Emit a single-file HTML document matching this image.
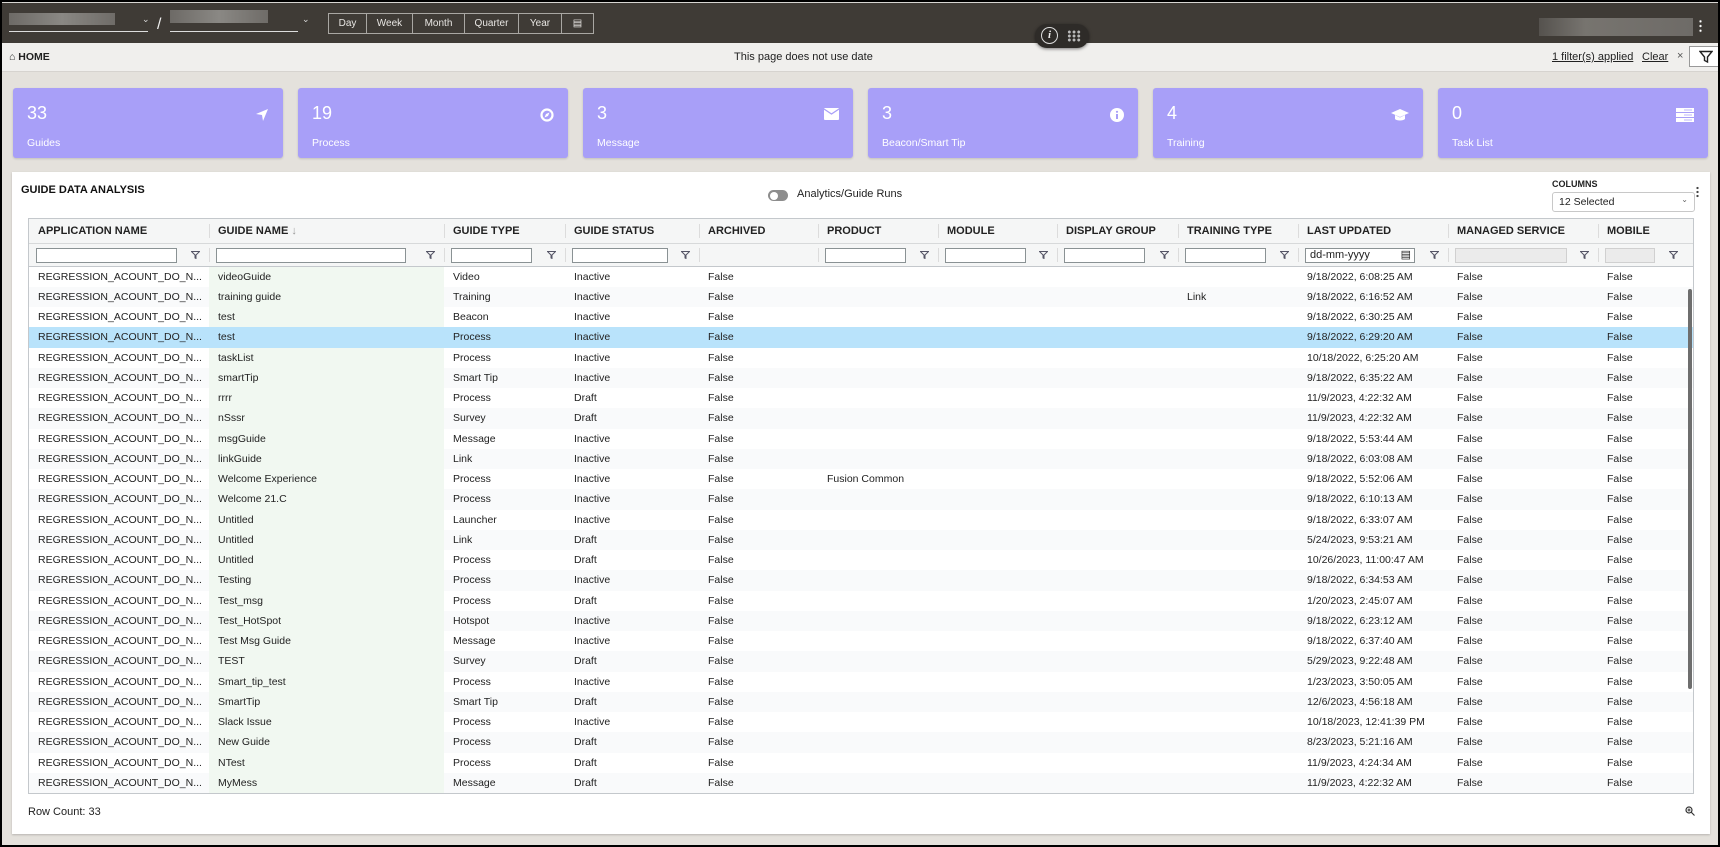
<!DOCTYPE html>
<html><head><meta charset="utf-8"><style>
*{box-sizing:border-box;margin:0;padding:0}
body{width:1720px;height:847px;overflow:hidden;background:#000;font-family:"Liberation Sans",sans-serif;position:relative}
#frame{position:absolute;left:2px;top:2px;width:1716px;height:843px;background:#e4e1dc;overflow:hidden}
.abs{position:absolute}
#top{left:0;top:0;width:1716px;height:41px;background:#3f3b36;border-top:1px solid #d8d6d2}
.blur{background:linear-gradient(90deg,#6d6a66,#8a8884,#6f6c68);}
.btns{left:326px;top:10px;height:21px;display:flex;border:1px solid #a9a7a3}
.btns div{color:#e8e6e3;font-size:10px;line-height:19px;text-align:center;border-right:1px solid #a9a7a3}
.btns div:last-child{border-right:none}
#home{left:0;top:41px;width:1716px;height:29px;background:#f0efed;border-bottom:1px solid #d6d3cf;font-size:11px;color:#222}
.card{position:absolute;top:86px;width:270px;height:70px;background:#a89ff8;border-radius:3px;color:#fff;box-shadow:0 1px 2px rgba(0,0,0,.15)}
.card .n{position:absolute;left:14px;top:15px;font-size:18px;font-weight:300}
.card .l{position:absolute;left:14px;top:49px;font-size:10.5px}
.card svg{position:absolute;right:14px;top:20px}
#panel{left:10px;top:170px;width:1698px;height:662px;background:#fff;box-shadow:0 1px 2px rgba(0,0,0,.2)}
table{border-collapse:collapse;table-layout:fixed;font-size:10.5px;color:#222}
#tbl{position:absolute;left:16px;top:46px;width:1666px;height:576px;border:1px solid #c4c8cc;overflow:hidden}
th{height:24px;line-height:24px;text-align:left;font-size:11px;font-weight:bold;padding-left:9px;background:#f5f6f6;position:relative;white-space:nowrap;overflow:hidden}
th .s{position:absolute;left:0;top:5px;width:1px;height:14px;background:#dcdcdc}
tr.f td{height:23px;line-height:23px;background:#f5f6f6;border-bottom:1px solid #c4c8cc;border-top:1px solid #d7d9da;position:relative}
tr.f .in{position:absolute;left:7px;top:4px;height:15px;border:1px solid #8a9294;background:#fff}
tr.f .in.d{background:#ebebeb;border-color:#d0d0d0}
tr.f .fi{position:absolute;right:9px;top:7px}
tr.f .s{position:absolute;left:0;top:4px;width:1px;height:14px;background:#dcdcdc}
tbody tr{height:20.25px}
tbody td{height:20.25px;line-height:18px;padding-left:9px;white-space:nowrap;overflow:hidden}
tbody tr:nth-child(even) td{background:#f9fafb}
tbody td.g{background:#f1f8f1!important}
tbody tr.sel td{background:#b9e3fb!important}
</style></head><body><div id="frame">
<div id="top" class="abs">
  <div class="abs blur" style="left:7px;top:10px;width:106px;height:12px"></div>
  <div class="abs" style="left:7px;top:28px;width:139px;height:1px;background:#ddd"></div>
  <div class="abs" style="left:140px;top:11px;color:#ddd;font-size:9px">&#8964;</div>
  <div class="abs" style="left:155px;top:13px;color:#eee;font-size:16px">/</div>
  <div class="abs blur" style="left:168px;top:7px;width:98px;height:13px"></div>
  <div class="abs" style="left:168px;top:28px;width:128px;height:1px;background:#ddd"></div>
  <div class="abs" style="left:300px;top:11px;color:#ddd;font-size:9px">&#8964;</div>
  <div class="abs btns"><div style="width:38px">Day</div><div style="width:46px">Week</div><div style="width:52px">Month</div><div style="width:54px">Quarter</div><div style="width:43px">Year</div><div style="width:31px">&#9636;</div></div>
  <div class="abs blur" style="left:1537px;top:15px;width:154px;height:18px;background:linear-gradient(90deg,#55524e,#77746f 30%,#6e6b67)"></div>
  <div class="abs" style="left:1697px;top:16px;width:3px;height:14px;background:radial-gradient(circle,#fff 1px,transparent 1.3px) 0 0/3px 4.7px"></div>
</div>
<div id="home" class="abs">
  <div class="abs" style="left:7px;top:8px;font-weight:bold;font-size:10.5px">&#8962; HOME</div>
  <div class="abs" style="left:732px;top:8px">This page does not use date</div>
  <div class="abs" style="left:1550px;top:8px;text-decoration:underline">1 filter(s) applied</div>
  <div class="abs" style="left:1640px;top:8px;text-decoration:underline">Clear</div>
  <div class="abs" style="left:1675px;top:7px;color:#555">×</div>
  <div class="abs" style="left:1687px;top:3px;width:32px;height:21px;border:1px solid #999;background:#fff"><svg width="14" height="14" viewBox="0 0 14 14" style="margin:3px 0 0 9px"><path d="M1 1.5h12L8.5 7v5l-3-1.5V7z" fill="none" stroke="#222" stroke-width="1.4"/></svg></div>
</div>
<div class="abs" style="left:1033px;top:22px;width:54px;height:24px;border-radius:12px;background:#2e2b28;box-shadow:0 1px 3px rgba(0,0,0,.5)">
  <div class="abs" style="left:6px;top:3px;width:17px;height:17px;border:1.5px solid #ddd;border-radius:50%;color:#eee;font:italic bold 11px 'Liberation Serif',serif;text-align:center;line-height:15px">i</div>
  <div class="abs" style="left:32px;top:6px;width:14px;height:12px;background:radial-gradient(circle,#bbb 1.3px,transparent 1.6px) 0 0/4.7px 4px"></div>
</div>
<div class="card" style="left:11px"><div class="n">33</div><div class="l">Guides</div><svg width="14" height="14" viewBox="0 0 14 14"><path d="M13 1L1 6l6 1 1 6z" fill="#fff"/></svg></div>
<div class="card" style="left:296px"><div class="n">19</div><div class="l">Process</div><svg width="14" height="14" viewBox="0 0 14 14"><circle cx="7" cy="7" r="5.5" fill="none" stroke="#fff" stroke-width="2.2"/><path d="M9.5 4.5L6 6 4.5 9.5 8 8z" fill="#fff"/></svg></div>
<div class="card" style="left:581px"><div class="n">3</div><div class="l">Message</div><svg width="15" height="12" viewBox="0 0 15 12"><rect x="0" y="0" width="15" height="12" rx="1" fill="#fff"/><path d="M0 1l7.5 5L15 1" fill="none" stroke="#a89ff8" stroke-width="1.3"/></svg></div>
<div class="card" style="left:866px"><div class="n">3</div><div class="l">Beacon/Smart Tip</div><svg width="14" height="14" viewBox="0 0 14 14"><circle cx="7" cy="7" r="7" fill="#fff"/><rect x="6" y="6" width="2" height="5" fill="#a89ff8"/><circle cx="7" cy="3.8" r="1.1" fill="#a89ff8"/></svg></div>
<div class="card" style="left:1151px"><div class="n">4</div><div class="l">Training</div><svg width="18" height="14" viewBox="0 0 18 14"><path d="M9 1L0 5l9 4 9-4z" fill="#fff"/><path d="M4 7v4c2 2 8 2 10 0V7L9 9.5z" fill="#fff"/></svg></div>
<div class="card" style="left:1436px"><div class="n">0</div><div class="l">Task List</div><svg width="18" height="14" viewBox="0 0 18 14"><rect width="18" height="4" fill="#fff"/><rect y="5" width="18" height="4" fill="#fff"/><rect y="10" width="18" height="4" fill="#fff"/><path d="M8 2h8M8 7h8M8 12h8" stroke="#a89ff8" stroke-width=".8"/></svg></div>
<div id="panel" class="abs">
  <div class="abs" style="left:9px;top:12px;font-size:11px;font-weight:bold;color:#111">GUIDE DATA ANALYSIS</div>
  <div class="abs" style="left:756px;top:18px;width:20px;height:11px;border-radius:6px;background:#8d8d8d"><div style="margin:1.5px;width:8px;height:8px;border-radius:50%;background:#fff"></div></div>
  <div class="abs" style="left:785px;top:16px;font-size:11px;color:#222">Analytics/Guide Runs</div>
  <div class="abs" style="left:1540px;top:7px;font-size:9px;font-weight:bold;color:#222">COLUMNS</div>
  <div class="abs" style="left:1684px;top:14px;width:3px;height:12px;background:radial-gradient(circle,#444 1px,transparent 1.3px) 0 0/3px 4px"></div>
  <div class="abs" style="left:1540px;top:20px;width:143px;height:20px;border:1px solid #c8c8c8;border-radius:3px;font-size:10.5px;padding:3px 0 0 6px;color:#222">12 Selected<span style="position:absolute;right:6px;top:2px;font-size:8px;color:#666">&#8964;</span></div>
  <div id="tbl">
  <table style="width:1666px">
  <colgroup><col style="width:180px"><col style="width:235px"><col style="width:121px"><col style="width:134px"><col style="width:119px"><col style="width:120px"><col style="width:119px"><col style="width:121px"><col style="width:120px"><col style="width:150px"><col style="width:150px"><col style="width:89px"><col style="width:8px"></colgroup>
  <thead><tr><th>APPLICATION NAME</th><th><span class="s"></span>GUIDE NAME <span style="color:#999;font-weight:normal">&#8595;</span></th><th><span class="s"></span>GUIDE TYPE</th><th><span class="s"></span>GUIDE STATUS</th><th><span class="s"></span>ARCHIVED</th><th><span class="s"></span>PRODUCT</th><th><span class="s"></span>MODULE</th><th><span class="s"></span>DISPLAY GROUP</th><th><span class="s"></span>TRAINING TYPE</th><th><span class="s"></span>LAST UPDATED</th><th><span class="s"></span>MANAGED SERVICE</th><th><span class="s"></span>MOBILE</th><th></th></tr>
  <tr class="f">
  <td><div class="in" style="width:141px"></div><svg class="fi" width="9" height="8"><path d="M.5.5h8L5 4v3.5L4 7V4z" fill="none" stroke="#556" /></svg></td>
  <td><span class="s"></span><div class="in" style="width:190px"></div><svg class="fi" width="9" height="8"><path d="M.5.5h8L5 4v3.5L4 7V4z" fill="none" stroke="#556"/></svg></td>
  <td><span class="s"></span><div class="in" style="width:81px"></div><svg class="fi" width="9" height="8"><path d="M.5.5h8L5 4v3.5L4 7V4z" fill="none" stroke="#556"/></svg></td>
  <td><span class="s"></span><div class="in" style="width:96px"></div><svg class="fi" width="9" height="8"><path d="M.5.5h8L5 4v3.5L4 7V4z" fill="none" stroke="#556"/></svg></td>
  <td><span class="s"></span></td>
  <td><span class="s"></span><div class="in" style="width:81px"></div><svg class="fi" width="9" height="8"><path d="M.5.5h8L5 4v3.5L4 7V4z" fill="none" stroke="#556"/></svg></td>
  <td><span class="s"></span><div class="in" style="width:81px"></div><svg class="fi" width="9" height="8"><path d="M.5.5h8L5 4v3.5L4 7V4z" fill="none" stroke="#556"/></svg></td>
  <td><span class="s"></span><div class="in" style="width:81px"></div><svg class="fi" width="9" height="8"><path d="M.5.5h8L5 4v3.5L4 7V4z" fill="none" stroke="#556"/></svg></td>
  <td><span class="s"></span><div class="in" style="width:81px"></div><svg class="fi" width="9" height="8"><path d="M.5.5h8L5 4v3.5L4 7V4z" fill="none" stroke="#556"/></svg></td>
  <td><span class="s"></span><div class="in" style="width:110px;font-size:11px;padding-left:4px;line-height:13px">dd-mm-yyyy<span style="position:absolute;right:3px;top:0">&#9636;</span></div><svg class="fi" width="9" height="8"><path d="M.5.5h8L5 4v3.5L4 7V4z" fill="none" stroke="#556"/></svg></td>
  <td><span class="s"></span><div class="in d" style="width:112px"></div><svg class="fi" width="9" height="8"><path d="M.5.5h8L5 4v3.5L4 7V4z" fill="none" stroke="#556"/></svg></td>
  <td><span class="s"></span><div class="in d" style="width:50px"></div><svg class="fi" width="9" height="8"><path d="M.5.5h8L5 4v3.5L4 7V4z" fill="none" stroke="#556"/></svg></td>
  <td></td></tr></thead>
  <tbody>
<tr><td>REGRESSION_ACOUNT_DO_N...</td><td class="g">videoGuide</td><td>Video</td><td>Inactive</td><td>False</td><td></td><td></td><td></td><td></td><td>9/18/2022, 6:08:25 AM</td><td>False</td><td>False</td><td></td></tr>
<tr><td>REGRESSION_ACOUNT_DO_N...</td><td class="g">training guide</td><td>Training</td><td>Inactive</td><td>False</td><td></td><td></td><td></td><td>Link</td><td>9/18/2022, 6:16:52 AM</td><td>False</td><td>False</td><td></td></tr>
<tr><td>REGRESSION_ACOUNT_DO_N...</td><td class="g">test</td><td>Beacon</td><td>Inactive</td><td>False</td><td></td><td></td><td></td><td></td><td>9/18/2022, 6:30:25 AM</td><td>False</td><td>False</td><td></td></tr>
<tr class="sel"><td>REGRESSION_ACOUNT_DO_N...</td><td class="g">test</td><td>Process</td><td>Inactive</td><td>False</td><td></td><td></td><td></td><td></td><td>9/18/2022, 6:29:20 AM</td><td>False</td><td>False</td><td></td></tr>
<tr><td>REGRESSION_ACOUNT_DO_N...</td><td class="g">taskList</td><td>Process</td><td>Inactive</td><td>False</td><td></td><td></td><td></td><td></td><td>10/18/2022, 6:25:20 AM</td><td>False</td><td>False</td><td></td></tr>
<tr><td>REGRESSION_ACOUNT_DO_N...</td><td class="g">smartTip</td><td>Smart Tip</td><td>Inactive</td><td>False</td><td></td><td></td><td></td><td></td><td>9/18/2022, 6:35:22 AM</td><td>False</td><td>False</td><td></td></tr>
<tr><td>REGRESSION_ACOUNT_DO_N...</td><td class="g">rrrr</td><td>Process</td><td>Draft</td><td>False</td><td></td><td></td><td></td><td></td><td>11/9/2023, 4:22:32 AM</td><td>False</td><td>False</td><td></td></tr>
<tr><td>REGRESSION_ACOUNT_DO_N...</td><td class="g">nSssr</td><td>Survey</td><td>Draft</td><td>False</td><td></td><td></td><td></td><td></td><td>11/9/2023, 4:22:32 AM</td><td>False</td><td>False</td><td></td></tr>
<tr><td>REGRESSION_ACOUNT_DO_N...</td><td class="g">msgGuide</td><td>Message</td><td>Inactive</td><td>False</td><td></td><td></td><td></td><td></td><td>9/18/2022, 5:53:44 AM</td><td>False</td><td>False</td><td></td></tr>
<tr><td>REGRESSION_ACOUNT_DO_N...</td><td class="g">linkGuide</td><td>Link</td><td>Inactive</td><td>False</td><td></td><td></td><td></td><td></td><td>9/18/2022, 6:03:08 AM</td><td>False</td><td>False</td><td></td></tr>
<tr><td>REGRESSION_ACOUNT_DO_N...</td><td class="g">Welcome Experience</td><td>Process</td><td>Inactive</td><td>False</td><td>Fusion Common</td><td></td><td></td><td></td><td>9/18/2022, 5:52:06 AM</td><td>False</td><td>False</td><td></td></tr>
<tr><td>REGRESSION_ACOUNT_DO_N...</td><td class="g">Welcome 21.C</td><td>Process</td><td>Inactive</td><td>False</td><td></td><td></td><td></td><td></td><td>9/18/2022, 6:10:13 AM</td><td>False</td><td>False</td><td></td></tr>
<tr><td>REGRESSION_ACOUNT_DO_N...</td><td class="g">Untitled</td><td>Launcher</td><td>Inactive</td><td>False</td><td></td><td></td><td></td><td></td><td>9/18/2022, 6:33:07 AM</td><td>False</td><td>False</td><td></td></tr>
<tr><td>REGRESSION_ACOUNT_DO_N...</td><td class="g">Untitled</td><td>Link</td><td>Draft</td><td>False</td><td></td><td></td><td></td><td></td><td>5/24/2023, 9:53:21 AM</td><td>False</td><td>False</td><td></td></tr>
<tr><td>REGRESSION_ACOUNT_DO_N...</td><td class="g">Untitled</td><td>Process</td><td>Draft</td><td>False</td><td></td><td></td><td></td><td></td><td>10/26/2023, 11:00:47 AM</td><td>False</td><td>False</td><td></td></tr>
<tr><td>REGRESSION_ACOUNT_DO_N...</td><td class="g">Testing</td><td>Process</td><td>Inactive</td><td>False</td><td></td><td></td><td></td><td></td><td>9/18/2022, 6:34:53 AM</td><td>False</td><td>False</td><td></td></tr>
<tr><td>REGRESSION_ACOUNT_DO_N...</td><td class="g">Test_msg</td><td>Process</td><td>Draft</td><td>False</td><td></td><td></td><td></td><td></td><td>1/20/2023, 2:45:07 AM</td><td>False</td><td>False</td><td></td></tr>
<tr><td>REGRESSION_ACOUNT_DO_N...</td><td class="g">Test_HotSpot</td><td>Hotspot</td><td>Inactive</td><td>False</td><td></td><td></td><td></td><td></td><td>9/18/2022, 6:23:12 AM</td><td>False</td><td>False</td><td></td></tr>
<tr><td>REGRESSION_ACOUNT_DO_N...</td><td class="g">Test Msg Guide</td><td>Message</td><td>Inactive</td><td>False</td><td></td><td></td><td></td><td></td><td>9/18/2022, 6:37:40 AM</td><td>False</td><td>False</td><td></td></tr>
<tr><td>REGRESSION_ACOUNT_DO_N...</td><td class="g">TEST</td><td>Survey</td><td>Draft</td><td>False</td><td></td><td></td><td></td><td></td><td>5/29/2023, 9:22:48 AM</td><td>False</td><td>False</td><td></td></tr>
<tr><td>REGRESSION_ACOUNT_DO_N...</td><td class="g">Smart_tip_test</td><td>Process</td><td>Inactive</td><td>False</td><td></td><td></td><td></td><td></td><td>1/23/2023, 3:50:05 AM</td><td>False</td><td>False</td><td></td></tr>
<tr><td>REGRESSION_ACOUNT_DO_N...</td><td class="g">SmartTip</td><td>Smart Tip</td><td>Draft</td><td>False</td><td></td><td></td><td></td><td></td><td>12/6/2023, 4:56:18 AM</td><td>False</td><td>False</td><td></td></tr>
<tr><td>REGRESSION_ACOUNT_DO_N...</td><td class="g">Slack Issue</td><td>Process</td><td>Inactive</td><td>False</td><td></td><td></td><td></td><td></td><td>10/18/2023, 12:41:39 PM</td><td>False</td><td>False</td><td></td></tr>
<tr><td>REGRESSION_ACOUNT_DO_N...</td><td class="g">New Guide</td><td>Process</td><td>Draft</td><td>False</td><td></td><td></td><td></td><td></td><td>8/23/2023, 5:21:16 AM</td><td>False</td><td>False</td><td></td></tr>
<tr><td>REGRESSION_ACOUNT_DO_N...</td><td class="g">NTest</td><td>Process</td><td>Draft</td><td>False</td><td></td><td></td><td></td><td></td><td>11/9/2023, 4:24:34 AM</td><td>False</td><td>False</td><td></td></tr>
<tr><td>REGRESSION_ACOUNT_DO_N...</td><td class="g">MyMess</td><td>Message</td><td>Draft</td><td>False</td><td></td><td></td><td></td><td></td><td>11/9/2023, 4:22:32 AM</td><td>False</td><td>False</td><td></td></tr>
  </tbody></table>
  <div class="abs" style="right:1px;top:70px;width:4px;height:400px;background:#6e6e6e;border-radius:2px"></div>
  </div>
  <div class="abs" style="left:16px;top:634px;font-size:11px;color:#222">Row Count: 33</div>
  <svg class="abs" style="left:1673px;top:634px" width="10" height="10" viewBox="0 0 10 10"><circle cx="4" cy="4" r="3" fill="none" stroke="#333" stroke-width="1.2"/><path d="M6.2 6.2L9.5 9.5M2.5 4h3M4 2.5v3" stroke="#333" stroke-width="1.1"/></svg>
</div>
</div></body></html>
